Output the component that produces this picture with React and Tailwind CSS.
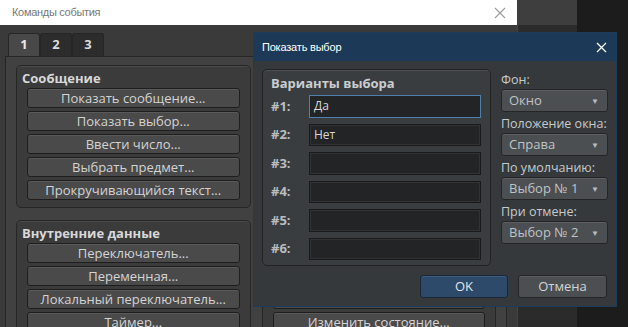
import React from 'react';

const font = { fontFamily: '"Open Sans", "Noto Sans", sans-serif' };
const titleFont = { fontFamily: '"Liberation Sans", Arial, sans-serif' };

const leftGroups = [
  { title: 'Сообщение', items: ['Показать сообщение...', 'Показать выбор...', 'Ввести число...', 'Выбрать предмет...', 'Прокручивающийся текст...'] },
  { title: 'Внутренние данные', items: ['Переключатель...', 'Переменная...', 'Локальный переключатель...', 'Таймер...'] },
];

// right column sits under the dialog; only the last button peeks out below it
const rightGroups = [
  { title: '', items: ['', '', '', '', ''] },
  { title: '', items: ['', '', '', 'Изменить состояние...'] },
];

const choices = ['Да', 'Нет', '', '', '', ''];

const selects = [
  { label: 'Фон:', value: 'Окно' },
  { label: 'Положение окна:', value: 'Справа' },
  { label: 'По умолчанию:', value: 'Выбор № 1' },
  { label: 'При отмене:', value: 'Выбор № 2' },
];

const CmdButton = ({ label }) => (
  <div className="h-[20px] shrink-0 rounded-[3px] border border-[#1e1e1e] bg-[#4a4a4a] flex items-center justify-center text-[13px] text-[#d4d4d4] leading-none shadow-[inset_0_1px_0_#5a5a5a]">
    {label}
  </div>
);

const Group = ({ title, items }) => (
  <div className="shrink-0 rounded-[5px] border border-[#262626] bg-[#3b3b3b] shadow-[inset_0_1px_0_#4a4a4a] px-[10px] pt-[3px] pb-[7px]">
    <div className="text-[13px] font-bold text-[#d8d8d8] h-[19px] leading-[19px] -ml-[5px]">{title}</div>
    <div className="flex flex-col gap-[3px]">
      {items.map((i, n) => <CmdButton key={n} label={i} />)}
    </div>
  </div>
);

const Select = ({ value }) => (
  <div className="h-[23px] rounded-[3px] border border-[#252525] bg-[#4c4f52] shadow-[inset_0_1px_0_#5c5f62] flex items-center justify-between pl-[7px] pr-[8px] text-[13px] text-[#bfc3c6]">
    <span>{value}</span>
    <span className="text-[8px] text-[#b8bcc0]">▼</span>
  </div>
);

const App = () => {
  return (
    <div className="relative w-[628px] h-[327px] overflow-hidden bg-[#1c1c1c] flex" style={font}>
      {/* background window */}
      <div className="w-[517px] shrink-0 flex flex-col overflow-hidden">
        <div className="h-[25px] shrink-0 bg-white flex items-center justify-between pl-[12px] pr-[11px] text-[11px] tracking-[-0.3px] text-[#777777]" style={titleFont}>
          <span>Команды события</span>
          <svg width="12" height="12" viewBox="0 0 12 12">
            <path d="M1 1L11 11M11 1L1 11" stroke="#9a9a9a" strokeWidth="1.1" />
          </svg>
        </div>
        <div className="flex-1 min-h-0 overflow-hidden bg-[#3a3a3a] pl-[5px] pr-[10px] pt-[8px]">
          <div className="flex pl-[3px] h-[23px]">
            <div className="w-[32px] rounded-t-[3px] border border-b-0 border-[#262626] bg-[#484848] text-[#e8e8e8] text-[13px] font-bold flex items-center justify-center">1</div>
            <div className="w-[32px] rounded-t-[3px] border border-b-0 border-[#262626] bg-[#2c2c2c] text-[#dcdcdc] text-[13px] font-bold flex items-center justify-center">2</div>
            <div className="w-[32px] rounded-t-[3px] border border-b-0 border-[#262626] bg-[#2c2c2c] text-[#dcdcdc] text-[13px] font-bold flex items-center justify-center">3</div>
          </div>
          <div className="h-[400px] border border-[#262626] bg-[#414141] pl-[10px] pr-[10px] pt-[8px] grid grid-cols-2 gap-x-[11px] content-start">
            <div className="flex flex-col gap-[12px]">
              {leftGroups.map(g => <Group key={g.title} {...g} />)}
            </div>
            <div className="flex flex-col gap-[12px]">
              {rightGroups.map((g, n) => <Group key={n} {...g} />)}
            </div>
          </div>
        </div>
      </div>
      <div className="w-[60px] shrink-0 flex flex-col">
        <div className="h-[25px] shrink-0 bg-[#3e3e3e]" />
        <div className="flex-1 bg-[#2b2b2b] border-l border-[#444]" />
      </div>

      {/* dialog */}
      <div className="absolute left-[253px] top-[32px] w-[364px] h-[275px] border border-[#1d3b5a] bg-[#36393b] flex flex-col">
        <div className="h-[28px] shrink-0 bg-[#1c3a58] flex items-center justify-between pl-[8px] pr-[9px] text-[11px] tracking-[-0.2px] text-white" style={titleFont}>
          <span>Показать выбор</span>
          <svg width="11" height="11" viewBox="0 0 11 11">
            <path d="M1 1L10 10M10 1L1 10" stroke="#ffffff" strokeWidth="1.3" />
          </svg>
        </div>
        <div className="flex-1 flex flex-col pl-[8px] pr-[8px] pt-[8px]">
          <div className="flex gap-[10px]">
            <div className="w-[229px] h-[197px] shrink-0 rounded-[5px] border border-[#222] bg-[#3a3d3f] shadow-[inset_0_1px_0_#4c4f52] pl-[8px] pr-[9px] pt-[3px]">
              <div className="text-[13px] font-bold text-[#c9cdd0] h-[20px] leading-[20px]">Варианты выбора</div>
              <div className="flex flex-col gap-[6px] mt-[2px]">
                {choices.map((c, i) => (
                  <div key={i} className="flex items-center h-[22.5px]">
                    <span className="w-[38px] text-[13px] font-bold text-[#b9bdc0]">#{i + 1}:</span>
                    <div className={`flex-1 h-full flex items-center pl-[4px] text-[12px] text-[#d8d8d8] bg-[#222426] ${i === 0 ? 'border border-[#4f7fae]' : 'border border-[#1a1a1a] shadow-[inset_0_0_0_1px_#303234]'}`}>
                      {c}
                    </div>
                  </div>
                ))}
              </div>
            </div>
            <div className="flex-1 min-w-0 flex flex-col gap-[3px] pt-[2px]">
              {selects.map(s => (
                <div key={s.label} className="flex flex-col">
                  <div className="text-[12.5px] whitespace-nowrap text-[#c6cacd] h-[18px] leading-[18px]">{s.label}</div>
                  <Select value={s.value} />
                </div>
              ))}
            </div>
          </div>
          <div className="flex justify-end gap-[10px] mt-[9px] pr-[1px]">
            <div className="w-[88px] h-[23px] rounded-[3px] border border-[#1c2734] bg-[#2d4a6b] shadow-[inset_0_1px_0_#3c5c80] flex items-center justify-center text-[13px] text-[#e0e4e8]">OK</div>
            <div className="w-[89px] h-[23px] rounded-[3px] border border-[#252525] bg-[#4c4f52] shadow-[inset_0_1px_0_#5c5f62] flex items-center justify-center text-[13px] text-[#d0d4d7]">Отмена</div>
          </div>
        </div>
      </div>
    </div>
  );
};

export default App;
